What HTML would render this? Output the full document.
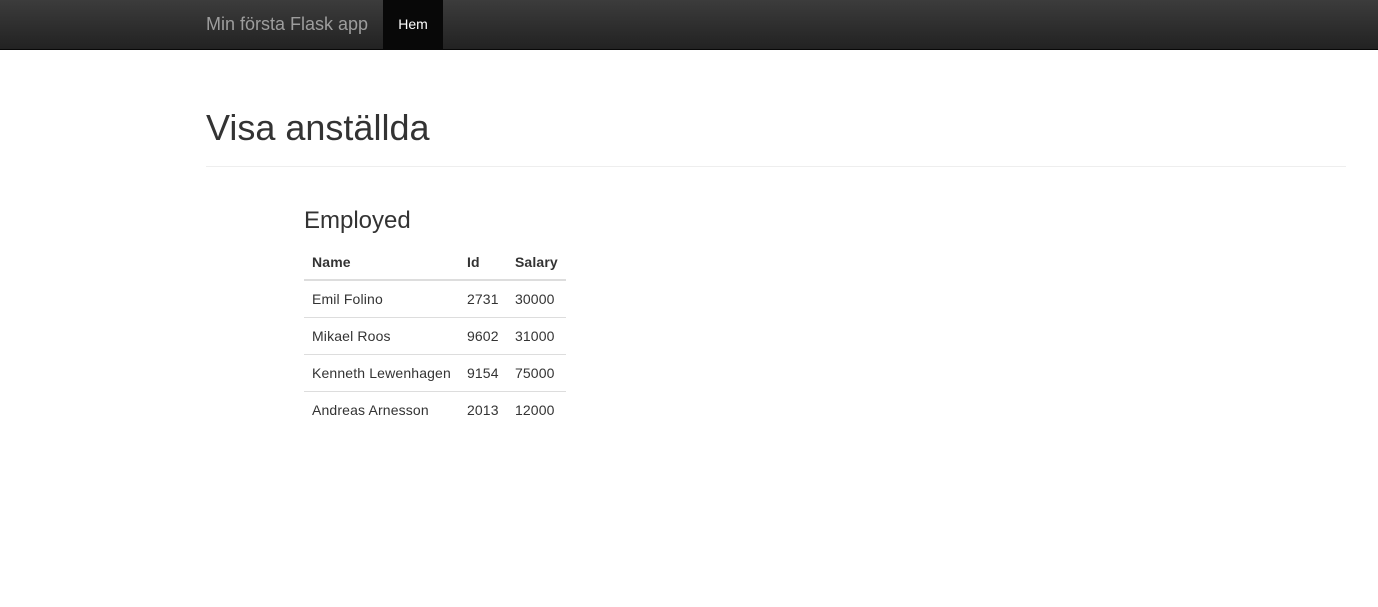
<!DOCTYPE html>
<html><head><meta charset="utf-8"><style>
body{margin:0;font-family:"Liberation Sans",sans-serif;font-size:14px;color:#333;background:#fff;}
.nav{height:49px;border-bottom:1px solid #080808;background:linear-gradient(#3c3c3c,#222);position:relative;}
.brand{position:absolute;left:206px;top:14px;font-size:18px;color:#9d9d9d;line-height:20px;}
.hem{position:absolute;left:383px;top:0;width:60px;height:49px;background:#080808;color:#fff;line-height:49px;text-align:center;font-size:14px;}
h1{position:absolute;left:206px;top:108px;margin:0;font-size:36px;font-weight:500;line-height:40px;}
.hr{position:absolute;left:206px;top:166px;width:1140px;border-top:1px solid #eee;}
h3{position:absolute;left:304px;top:207px;margin:0;font-size:24px;font-weight:500;line-height:28px;}
table{position:absolute;left:304px;top:244px;border-collapse:collapse;letter-spacing:0.15px;}
th,td{padding:8px;line-height:20px;text-align:left;white-space:nowrap;}
th{border-bottom:2px solid #ddd;font-weight:bold;padding-bottom:7px;}
td{border-top:1px solid #ddd;padding-top:8px;padding-bottom:8px;}
tr:nth-child(2) td{border-top:0;}
</style></head><body>
<div class="nav"><div class="brand">Min första Flask app</div><div class="hem">Hem</div></div>
<h1>Visa anställda</h1><div class="hr"></div>
<h3>Employed</h3>
<table>
<tr><th style="width:138px">Name</th><th style="width:32px">Id</th><th>Salary</th></tr>
<tr><td>Emil Folino</td><td>2731</td><td>30000</td></tr>
<tr><td>Mikael Roos</td><td>9602</td><td>31000</td></tr>
<tr><td>Kenneth Lewenhagen</td><td>9154</td><td>75000</td></tr>
<tr><td>Andreas Arnesson</td><td>2013</td><td>12000</td></tr>
</table>
</body></html>
